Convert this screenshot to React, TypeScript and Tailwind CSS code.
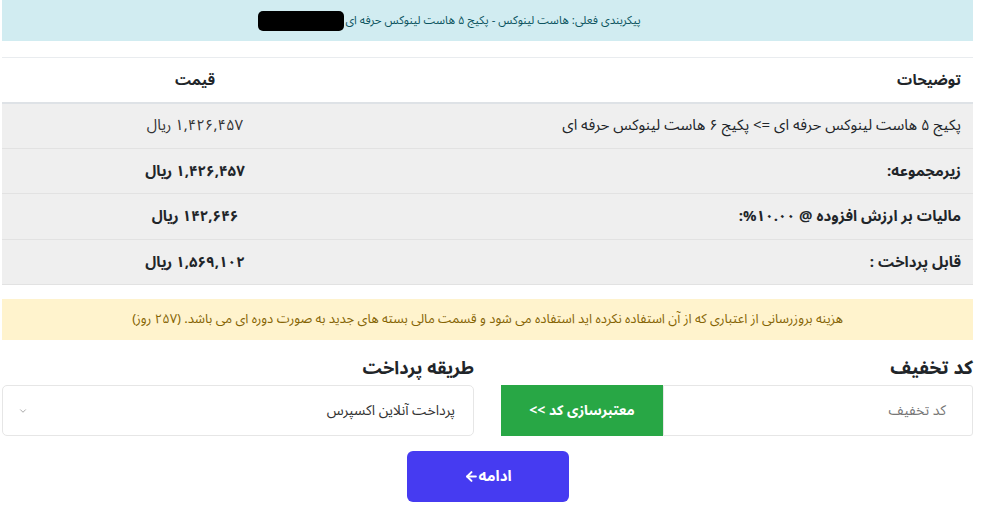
import { ArrowLeft, ChevronDown } from "lucide-react";

const FONT = "font-['Noto_Sans_Arabic','DejaVu_Sans',sans-serif]";

const rows = [
  { label: "پکیج ۵ هاست لینوکس حرفه ای => پکیج ۶ هاست لینوکس حرفه ای", price: "۱,۴۲۶,۴۵۷ ریال", bold: false },
  { label: "زیرمجموعه:", price: "۱,۴۲۶,۴۵۷ ریال", bold: true },
  { label: "مالیات بر ارزش افزوده @ ۱۰.۰۰%:", price: "۱۴۲,۶۴۶ ریال", bold: true },
  { label: "قابل پرداخت :", price: "۱,۵۶۹,۱۰۲ ریال", bold: true },
];

export default function App() {
  return (
    <div dir="rtl" className={`h-[512px] w-[1000px] bg-white text-[#212529] ${FONT}`}>
      <div className="ml-[2px] mr-auto w-[971px]">
        <div className="flex h-[41px] items-center justify-center bg-[#d1ecf1] text-[11.5px] text-[#0c5460]">
          <span className="-translate-x-[38px]">پیکربندی فعلی: هاست لینوکس - پکیج ۵ هاست لینوکس حرفه ای</span>
          <span className="mr-[1px] inline-block h-[20px] w-[86px] -translate-x-[38px] rounded-[5px] bg-black" />
        </div>

        <table className="mt-[16px] w-full border-t border-[#e9ecef] text-[15px]">
          <thead>
            <tr className="h-[45px] border-b-2 border-[#dee2e6]">
              <th className="pr-[12px] text-right font-bold">توضیحات</th>
              <th className="w-[386px] text-center font-bold">قیمت</th>
            </tr>
          </thead>
          <tbody>
            {rows.map((r) => (
              <tr key={r.label} className="h-[45.5px] border-b border-[#e2e2e2] bg-[#efefef]">
                <td className={`pr-[12px] text-right ${r.bold ? "font-bold" : ""}`}>{r.label}</td>
                <td className={`text-center ${r.bold ? "font-bold" : "text-[#333]"}`}>{r.price}</td>
              </tr>
            ))}
          </tbody>
        </table>

        <div className="mt-[14px] flex h-[41px] items-center justify-center bg-[#fff3cd] text-[13px] text-[#856404]">
          هزینه بروزرسانی از اعتباری که از آن استفاده نکرده اید استفاده می شود و قسمت مالی بسته های جدید به صورت دوره ای می باشد. (۲۵۷ روز)
        </div>

        <div className="mt-[12px] flex gap-[27px]">
          <div className="flex-1">
            <h3 className="h-[33px] text-[19px] font-bold leading-[33px]">کد تخفیف</h3>
            <div className="flex h-[51px]">
              <div className="flex flex-1 items-center rounded-r-[3px] border border-[#e6e6e6] pr-[26px] text-[14px] text-[#777]">
                کد تخفیف
              </div>
              <button className="w-[162px] bg-[#28a745] text-[14px] font-bold text-white">معتبرسازی کد &gt;&gt;</button>
            </div>
          </div>
          <div className="flex-1">
            <h3 className="h-[33px] text-[18px] font-bold leading-[33px]">طریقه پرداخت</h3>
            <div className="flex h-[51px] items-center justify-between rounded-[5px] border border-[#e6e6e6] px-[15px] text-[14px] text-[#333]">
              <span className="pr-[3px]">پرداخت آنلاین اکسپرس</span>
              <ChevronDown className="h-[10px] w-[10px] text-[#999]" strokeWidth={2} />
            </div>
          </div>
        </div>

        <div className="mt-[15px] flex justify-center">
          <button className="flex h-[51px] w-[162px] items-center justify-center rounded-[6px] bg-[#463bf1] text-[15px] font-bold text-white">
            ادامه
            <ArrowLeft className="h-[15px] w-[15px]" strokeWidth={3.2} />
          </button>
        </div>
      </div>
    </div>
  );
}
